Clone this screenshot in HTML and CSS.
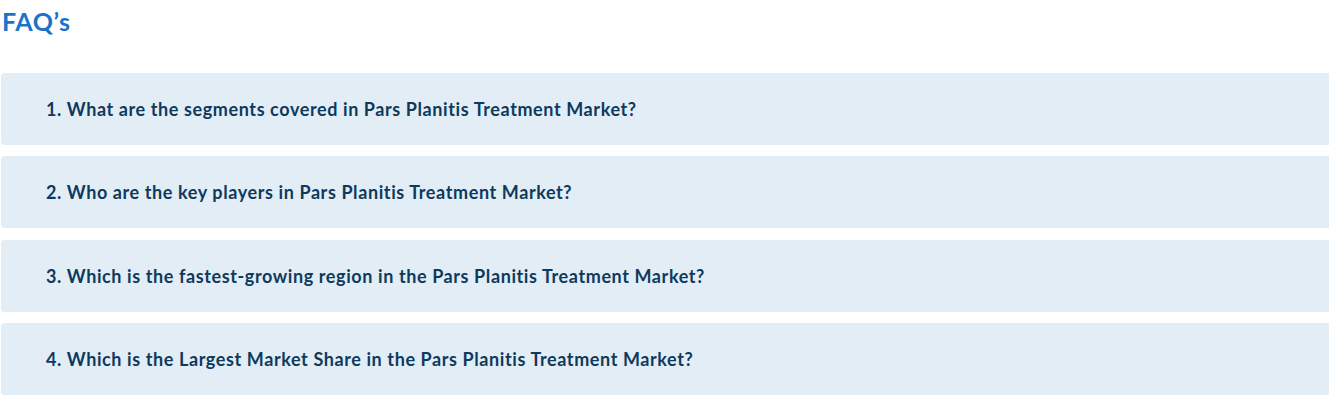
FILE: index.html
```html
<!DOCTYPE html>
<html lang="en">
<head>
    <meta charset="UTF-8">
    <meta name="viewport" content="width=device-width, initial-scale=1.0">
    <title>FAQ's</title>
    <link rel="stylesheet" href="styles.css">
</head>
<body>
    <section class="faq">
        <h2 class="faq-title">FAQ’s</h2>

        <div class="faq-list">
            <div class="faq-item">
                <h3 class="faq-question">1. What are the segments covered in Pars Planitis Treatment Market?</h3>
            </div>
            <div class="faq-item">
                <h3 class="faq-question">2. Who are the key players in Pars Planitis Treatment Market?</h3>
            </div>
            <div class="faq-item">
                <h3 class="faq-question">3. Which is the fastest-growing region in the Pars Planitis Treatment Market?</h3>
            </div>
            <div class="faq-item">
                <h3 class="faq-question">4. Which is the Largest Market Share in the Pars Planitis Treatment Market?</h3>
            </div>
        </div>
    </section>
</body>
</html>
```

FILE: styles.css
```css
body {
    font-family: Lato, 'Open Sans', sans-serif;
    margin: 0;
    background: #fff;
    overflow: hidden;
}

.faq {
    padding: 0 0 0 1px;
}

.faq-title {
    margin: 0;
    padding: 6px 0 0 1px;
    font-size: 25px;
    font-weight: 700;
    color: #1b73c9;
    line-height: 30px;
    letter-spacing: 0.6px;
}

.faq-list {
    display: flex;
    flex-direction: column;
    gap: 11.33px;
    margin-top: 37px;
    width: 1340px;
}

.faq-item {
    background-color: #e3edf6;
    border-radius: 4px;
    height: 72px;
    display: flex;
    align-items: center;
    padding: 0 45px;
}

.faq-question {
    margin: 0;
    font-size: 18px;
    font-weight: 700;
    color: #0e3a5d;
    letter-spacing: 0.6px;
}
```
